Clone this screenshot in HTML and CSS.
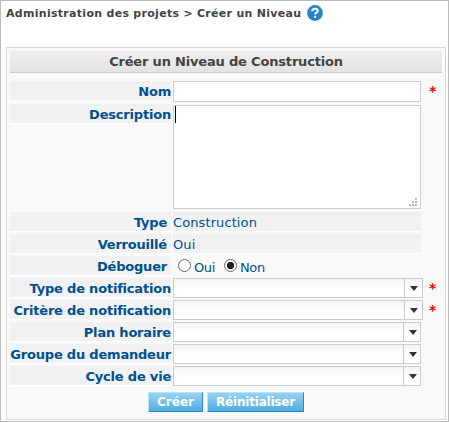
FILE: index.html
```html
<!DOCTYPE html>
<html lang="fr">
<head>
<meta charset="utf-8">
<title>Créer un Niveau</title>
<link rel="stylesheet" href="styles.css">
</head>
<body>
<main class="page">
  <header class="crumbs"><span class="crumb-text">Administration des projets &gt; Créer un Niveau</span>
    <svg class="help" viewBox="0 0 16 16"><circle cx="8" cy="8" r="7.9" fill="#2484c6"/><path d="M5.2 6.3C5.2 4.5 6.3 3.7 8 3.7s2.8.8 2.8 2.2c0 1.8-2.7 1.8-2.7 3.7" fill="none" stroke="#fff" stroke-width="2"/><rect x="7.1" y="10.9" width="2" height="2" fill="#fff"/></svg>
  </header>
  <form class="panel">
    <h1 class="title"><span>Créer un Niveau de Construction</span></h1>
    <div class="row name"><label class="label"><span>Nom</span></label><div class="input"></div><span class="star">*</span></div>
    <div class="row description"><label class="label"><span>Description</span></label><div class="area"><i class="caret"></i><svg class="grip" viewBox="0 0 8 8"><path d="M6 0h2v2H6zM3 3h2v2H3zM6 3h2v2H6zM0 6h2v2H0zM3 6h2v2H3zM6 6h2v2H6z" fill="#bbb"/></svg></div></div>
    <div class="row"><label class="label inset"><span>Type</span></label><div class="value">Construction</div></div>
    <div class="row"><label class="label inset"><span>Verrouillé</span></label><div class="value">Oui</div></div>
    <div class="row"><label class="label inset"><span>Déboguer</span></label><div class="radios"><i class="radio"></i><span class="yes">Oui</span><i class="radio on"></i><span>Non</span></div></div>
    <div class="row"><label class="label"><span>Type de notification</span></label><div class="combo wide"><i class="arrow"></i></div><span class="star">*</span></div>
    <div class="row"><label class="label"><span>Critère de notification</span></label><div class="combo wide"><i class="arrow"></i></div><span class="star">*</span></div>
    <div class="row"><label class="label"><span>Plan horaire</span></label><div class="combo"><i class="arrow"></i></div></div>
    <div class="row"><label class="label"><span>Groupe du demandeur</span></label><div class="combo"><i class="arrow"></i></div></div>
    <div class="row"><label class="label"><span>Cycle de vie</span></label><div class="combo"><i class="arrow"></i></div></div>
    <div class="buttons"><button type="button" class="create">Créer</button><button type="button" class="reset">Réinitialiser</button></div>
  </form>
</main>
</body>
</html>
```
FILE: styles.css
```css
* { box-sizing: border-box; }
body { margin: 0; font: 13px/19px "DejaVu Sans", Verdana, sans-serif; color: #00508f; }
.page { width: 449px; height: 422px; border: 1px solid #bbb; padding: 0 2px 1px 5px; background: #fff; overflow: hidden; }
.crumbs { height: 46px; display: flex; align-items: flex-start; padding-top: 4px; color: #444; font-size: 11px; font-weight: bold; line-height: 17px; letter-spacing: .29px; white-space: nowrap; }
.crumb-text { width: 301px; }
.help { width: 16px; height: 16px; flex: none; }
.panel { width: 440px; height: 373px; margin: 0; padding: 3px; border: 1px solid #d8d8d8; background: #f9f9f9; }
.title { width: 432px; height: 22px; margin: 0 0 8px; border-bottom: 1px solid #ccc; background: linear-gradient(#efefef, #e3e3e3); color: #444; font-size: 13px; line-height: 21px; letter-spacing: -.18px; text-align: center; white-space: nowrap; }
.row { display: flex; align-items: flex-start; height: 22px; }
.name { height: 23px; }
.description { height: 108px; }
.label { width: 161px; height: 20px; margin-right: 2px; flex: none; display: flex; justify-content: flex-end; background: #f1f1f1; border-bottom: 1px solid #fff; font-weight: bold; line-height: 22px; letter-spacing: -.2px; white-space: nowrap; }
.inset { padding-right: 4px; }
.input { width: 248px; height: 21px; border: 1px solid #ccc; background: #fff; }
.area { position: relative; width: 248px; height: 104px; margin-top: 1px; border: 1px solid #ccc; background: #fff; }
.caret { display: block; width: 1px; height: 17px; margin: 0 0 0 1px; background: #000; }
.grip { position: absolute; right: 3px; bottom: 2px; width: 8px; height: 8px; }
.star { width: 8px; margin-left: 8px; color: #f00; font-weight: bold; font-size: 14px; line-height: 20px; }
.wide + .star { margin-left: 6px; }
.value { width: 248px; height: 20px; background: #f1f1f1; border-bottom: 1px solid #fff; line-height: 22px; letter-spacing: .1px; }
.radios { display: flex; line-height: 24px; letter-spacing: -.4px; padding-left: 5px; }
.radio { width: 13px; height: 13px; margin: 3px 3px 0 0; border: 1px solid #666; border-radius: 50%; background: #fff; }
.yes { width: 30px; }
.on { background: radial-gradient(circle, #222 0 3.4px, #fff 4px); }
.combo { display: flex; justify-content: flex-end; width: 248px; height: 20px; border: 1px solid #ccc; background: linear-gradient(#f4f4f4, #fff 10px); }
.wide { width: 250px; }
.arrow { display: flex; width: 17px; border-left: 1px solid #ccc; }
.wide .arrow { width: 18px; }
.arrow::before { content: ""; width: 8px; height: 5px; margin: 7px 0 0 5px; background: #333; clip-path: polygon(0 0, 100% 0, 50% 100%); }
.buttons { display: flex; gap: 4px; margin: 4px 0 0 138px; }
button { height: 20px; padding: 0; border: 1px solid; border-color: #aeeaff #2989c8 #2989c8 #aeeaff; background: linear-gradient(#9ad0f1, #4eaee0); color: #fff; font: bold 12px/18px "DejaVu Sans", Verdana, sans-serif; white-space: nowrap; }
.create { width: 55px; }
.reset { width: 97px; letter-spacing: -.2px; }
```
